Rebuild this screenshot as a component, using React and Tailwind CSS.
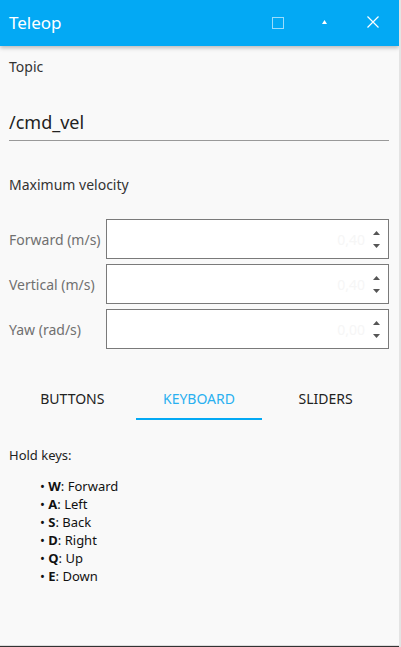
import React from 'react';

const font = { fontFamily: '"Noto Sans", "Open Sans", sans-serif' };

function Spinner() {
  return (
    <div className="flex flex-col items-center justify-center gap-[9px] w-[10px]">
      <svg width="7" height="4" viewBox="0 0 7 4"><path d="M0 4 L3.5 0 L7 4 Z" fill="#555" /></svg>
      <svg width="7" height="4" viewBox="0 0 7 4"><path d="M0 0 L3.5 4 L7 0 Z" fill="#555" /></svg>
    </div>
  );
}

function VelocityRow({ label, value }) {
  return (
    <div className="flex items-center h-[40px]">
      <div className="w-[97px] text-[14px] text-[#707070] whitespace-nowrap">{label}</div>
      <div className="flex-1 h-full border border-[#7a7a7a] bg-white flex items-center justify-end pr-[7px]">
        <span className="text-[14px] text-[#f6f6f6] mr-[6px]">{value}</span>
        <Spinner />
      </div>
    </div>
  );
}

export default function App() {
  const tabs = ['Buttons', 'Keyboard', 'Sliders'];
  const keys = [
    ['W', 'Forward'],
    ['A', 'Left'],
    ['S', 'Back'],
    ['D', 'Right'],
    ['Q', 'Up'],
    ['E', 'Down'],
  ];

  return (
    <div style={font} className="w-[401px] h-[647px] bg-[#f9f9f9] flex flex-col border-r-2 border-[#e4e4e4] overflow-hidden">
      {/* Title bar */}
      <header className="h-[46px] shrink-0 bg-[#03a9f4] flex items-center pl-[9px] shadow-[0_2px_4px_rgba(0,0,0,0.25)] relative z-10">
        <span className="text-white text-[17px] flex-1">Teleop</span>
        <div className="w-[12px] h-[12px] border border-white/60 mr-[38px]" />
        <svg width="5" height="4" viewBox="0 0 5 4" className="mr-[40px] -mt-[3px]"><path d="M0 4 L2.5 0 L5 4 Z" fill="white" /></svg>
        <svg width="12" height="12" viewBox="0 0 12 12" className="mr-[20px] -mt-[3px]">
          <path d="M0.5 0.5 L11.5 11.5 M11.5 0.5 L0.5 11.5" stroke="white" strokeWidth="1.2" />
        </svg>
      </header>

      <main className="flex-1 px-[9px] pr-[10px]">
        <div className="text-[14px] text-[#333] mt-[10px]">Topic</div>
        <div className="mt-[33px] border-b border-[#999] pb-[6px]">
          <div className="text-[18px] text-[#222] leading-[24px]">/cmd_vel</div>
        </div>

        <div className="text-[14px] text-[#333] mt-[33px]">Maximum velocity</div>

        <div className="mt-[24px] flex flex-col gap-[5px]">
          <VelocityRow label="Forward (m/s)" value="0,40" />
          <VelocityRow label="Vertical (m/s)" value="0,40" />
          <VelocityRow label="Yaw (rad/s)" value="0,00" />
        </div>

        {/* Tabs */}
        <div className="mt-[29px] grid grid-cols-3">
          {tabs.map((t) => (
            <div
              key={t}
              className={`h-[42px] flex items-center justify-center uppercase text-[14px] border-b-2 ${
                t === 'Keyboard' ? 'text-[#29b0f0] border-[#03a9f4]' : 'text-[#222] border-transparent'
              }`}
            >
              {t}
            </div>
          ))}
        </div>

        <div className="mt-[26px] text-[13px] text-[#222]">Hold keys:</div>
        <ul className="mt-[11px] pl-[31px] text-[13px] text-[#111] leading-[18px]">
          {keys.map(([k, v]) => (
            <li key={k}>
              • <b>{k}</b>: {v}
            </li>
          ))}
        </ul>
      </main>

      <div className="h-[2px] shrink-0 bg-[#333] border-t border-[#ddd]" />
    </div>
  );
}
